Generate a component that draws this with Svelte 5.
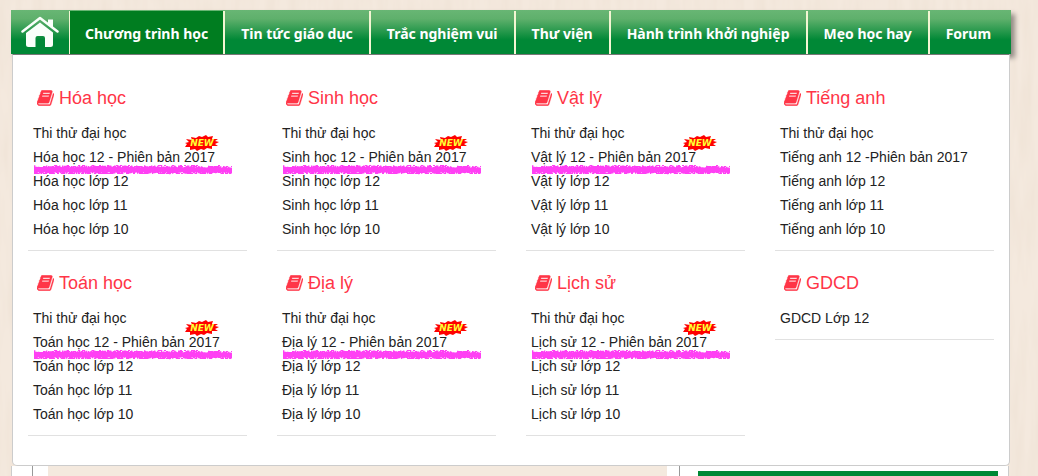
<script>
	const menu = [
		'Chương trình học',
		'Tin tức giáo dục',
		'Trắc nghiệm vui',
		'Thư viện',
		'Hành trình khởi nghiệp',
		'Mẹo học hay',
		'Forum'
	];

	function lopHoc(name) {
		return {
			name,
			links: [
				{ text: 'Thi thử đại học' },
				{ text: `${name} 12 - Phiên bản 2017`, isNew: true },
				{ text: `${name} lớp 12` },
				{ text: `${name} lớp 11` },
				{ text: `${name} lớp 10` }
			]
		};
	}

	const subjects = [
		lopHoc('Hóa học'),
		lopHoc('Sinh học'),
		lopHoc('Vật lý'),
		{
			name: 'Tiếng anh',
			links: [
				{ text: 'Thi thử đại học' },
				{ text: 'Tiếng anh 12 -Phiên bản 2017' },
				{ text: 'Tiếng anh lớp 12' },
				{ text: 'Tiếng anh lớp 11' },
				{ text: 'Tiếng anh lớp 10' }
			]
		},
		lopHoc('Toán học'),
		lopHoc('Địa lý'),
		lopHoc('Lịch sử'),
		{ name: 'GDCD', links: [{ text: 'GDCD Lớp 12' }] }
	];

	// rough marker stroke: dense core with loose specks on both edges
	function markerPath() {
		let seed = 7;
		const rand = () => {
			seed = (seed * 16807) % 2147483647;
			return seed / 2147483647;
		};
		let d = '';
		for (let x = 0; x < 198; x += 1) {
			const top = 0.3 + rand() * 2 + (x > 160 ? 0.5 : 0);
			const bottom = 7.2 + rand() * 2;
			d += `M${x} ${top.toFixed(1)}h1.4V${bottom.toFixed(1)}h-1.4z`;
			if (rand() > 0.7) d += `M${x} ${Math.floor(rand() * 2)}h2v1h-2z`;
			if (rand() > 0.7) d += `M${x} 8h2v1h-2z`;
		}
		return d;
	}

	const marker = markerPath();
</script>

<div class="page">
	<svg class="paper" aria-hidden="true">
		<filter id="grain" x="0" y="0" width="100%" height="100%">
			<feTurbulence type="fractalNoise" baseFrequency="0.09 0.012" numOctaves="3" seed="4" />
			<feColorMatrix values="0 0 0 0 0.7  0 0 0 0 0.58  0 0 0 0 0.45  0.3 0 0 0 -0.1" />
		</filter>
		<rect width="100%" height="100%" filter="url(#grain)" />
	</svg>

	<div class="wrap">
		<nav class="menu">
			<a class="home" href="#home" aria-label="Trang chủ">
				<svg width="38" height="32" viewBox="0 0 38 32">
					<path
						d="M1.5 15.5 L19 2 L36.5 15.5"
						fill="none"
						stroke="#fafffa"
						stroke-width="2.500"
						stroke-linecap="round"
						stroke-linejoin="round"
					/>
					<path d="M27 3.500h5v8l-5-4z" fill="#fafffa" />
					<path
						d="M19 6.500 L32 16.500 V28.500 Q32 31 29.500 31 H24 V22 Q24 20 22 20 H16.500 Q14.500 20 14.500 22 V31 H7.500 Q5 31 5 28.500 V17 Z"
						fill="#fafffa"
					/>
				</svg>
			</a>
			{#each menu as item, i}
				<a class="item" class:active={i === 0} href="#menu">{item}</a>
			{/each}
		</nav>

		<div class="panel">
			{#each subjects as subject}
				<section class="subject">
					<h2>
						<svg width="17" height="16" viewBox="0 0 1664 1536" aria-hidden="true">
							<path
								d="M1639 350q40 57 18 129l-275 906q-19 64-76.500 107.500T1183 1536H260q-77 0-148.500-53.500T12 1351q-24-67-2-127 0-4 3-27t4-37q1-8-3-21.500t-3-19.500q2-11 8-21t16.500-23.500T52 1051q23-38 45-91.500t30-91.500q3-10 .5-30t-.5-28q3-11 17-28t17-23q21-36 42-92t25-90q1-9-2.500-32t.5-28q4-13 22-30.500t22-22.500q19-26 42.500-84.500T340 283q1-8-3-25.500t-2-26.500q2-8 9-18t18-23 17-21q8-12 16.500-30.500t15-35 16-36 19.500-32T469.500 12t36-11.500T553 6l-1 3q38-9 51-9h761q74 0 114 56t18 130l-274 906q-36 119-71.500 153.500T1022 1280H153q-27 0-38 15-11 16-1 43 24 70 144 70h923q29 0 56-15.500t35-41.500l300-987q7-22 5-57 38 15 59 43zM575 352q-4 13 2 22.500t20 9.500h608q13 0 25.500-9.500T1247 352l21-64q4-13-2-22.500t-20-9.500H638q-13 0-25.500 9.500T596 288zm-83 256q-4 13 2 22.500t20 9.500h608q13 0 25.500-9.500T1164 608l21-64q4-13-2-22.500t-20-9.500H555q-13 0-25.500 9.500T513 544z"
								fill="currentColor"
								stroke="currentColor"
								stroke-width="30"
							/>
						</svg>
						{subject.name}
					</h2>
					<ul>
						{#each subject.links as link}
							<li>
								<a href="#lop">{link.text}</a>
								{#if link.isNew}
									<svg class="new" width="34" height="16" viewBox="0 0 34 16">
										<path
											d="M0 8l4-1-3-3 6 1-1-3 5 1 3-2 3 1 4-2 2 2 5-1-1 3 6 0-3 2 4 1-4 2 3 2-6 0 0 3-5-1-3 2-3-1-4 2-2-2-5 1 0-3-5 0 2-3z"
											fill="#f00"
										/>
										<text x="17" y="11" text-anchor="middle">NEW</text>
									</svg>
									<svg class="marker" width="198" height="10" viewBox="0 0 198 10">
										<path d={marker} fill="#ff40f4" />
									</svg>
								{/if}
							</li>
						{/each}
					</ul>
				</section>
			{/each}
		</div>

		<div class="content">
			<div class="main"></div>
			<div class="side"><div class="bar"></div></div>
		</div>
	</div>
</div>

<style>
	:global(body) {
		background: #f4e9de;
		font-family: 'Liberation Sans', Arial, sans-serif;
	}

	.page {
		position: relative;
		padding: 10px 27px 0 11px;
	}

	.paper {
		position: absolute;
		inset: 0;
		width: 100%;
		height: 100%;
	}

	.wrap {
		position: relative;
	}

	a {
		text-decoration: none;
	}

	.menu {
		display: flex;
		height: 44px;
		background: linear-gradient(#68b674 0, #5fb06c 20%, #008836 68%);
		box-shadow: 4px 4px 5px rgba(0, 0, 0, 0.4);
	}

	.home {
		display: flex;
		align-items: center;
		justify-content: center;
		width: 58px;
	}

	.item {
		margin-top: 1px;
		padding: 0 16px;
		border-left: 2px solid #f3f6d3;
		color: #fff;
		font: bold 14px/45px 'Noto Sans', sans-serif;
		white-space: nowrap;
	}

	.active {
		padding: 0 15px;
		border-left-width: 1px;
		background: #007d20;
	}

	.panel {
		position: relative;
		display: grid;
		grid-template-columns: repeat(4, 1fr);
		align-items: start;
		row-gap: 20px;
		margin: 0 1px;
		padding: 31px 0 29px;
		border: 1px solid #ccc;
		border-top-color: #777;
		border-radius: 0 0 5px 5px;
		background: #fff;
	}

	.subject {
		margin: 0 15px;
		padding-bottom: 9px;
		border-bottom: 1px solid #e1e1e1;
	}

	h2 {
		display: flex;
		align-items: center;
		gap: 5px;
		margin: 0 0 11px;
		padding-left: 9px;
		color: #ff3547;
		font-size: 18px;
		font-weight: normal;
		line-height: 24px;
	}

	ul {
		margin: 0;
		padding: 0 0 0 5px;
		list-style: none;
	}

	li {
		position: relative;
		font-size: 14px;
		line-height: 24px;
		white-space: nowrap;
	}

	li a {
		color: #222;
	}

	.new {
		position: absolute;
		top: -10px;
		left: 152px;
	}

	.new text {
		fill: #ff3;
		font: italic bold 9px 'DejaVu Sans', sans-serif;
	}

	.marker {
		position: absolute;
		z-index: 1;
		top: 20px;
		left: 1px;
	}

	.content {
		display: flex;
		height: 10px;
		margin-right: 2px;
		border: solid #ccc;
		border-width: 0 1px;
		background: #fff;
	}

	.main {
		flex: 1;
		margin-left: 20px;
		border: solid #999;
		border-width: 0 1px;
		background: linear-gradient(#f4e9de, #f4e9de) no-repeat 15px 0 / calc(100% - 27px) 100%;
	}

	.side {
		width: 300px;
		padding: 5px 10px 0 18px;
	}

	.bar {
		height: 5px;
		background: #008836;
	}
</style>
